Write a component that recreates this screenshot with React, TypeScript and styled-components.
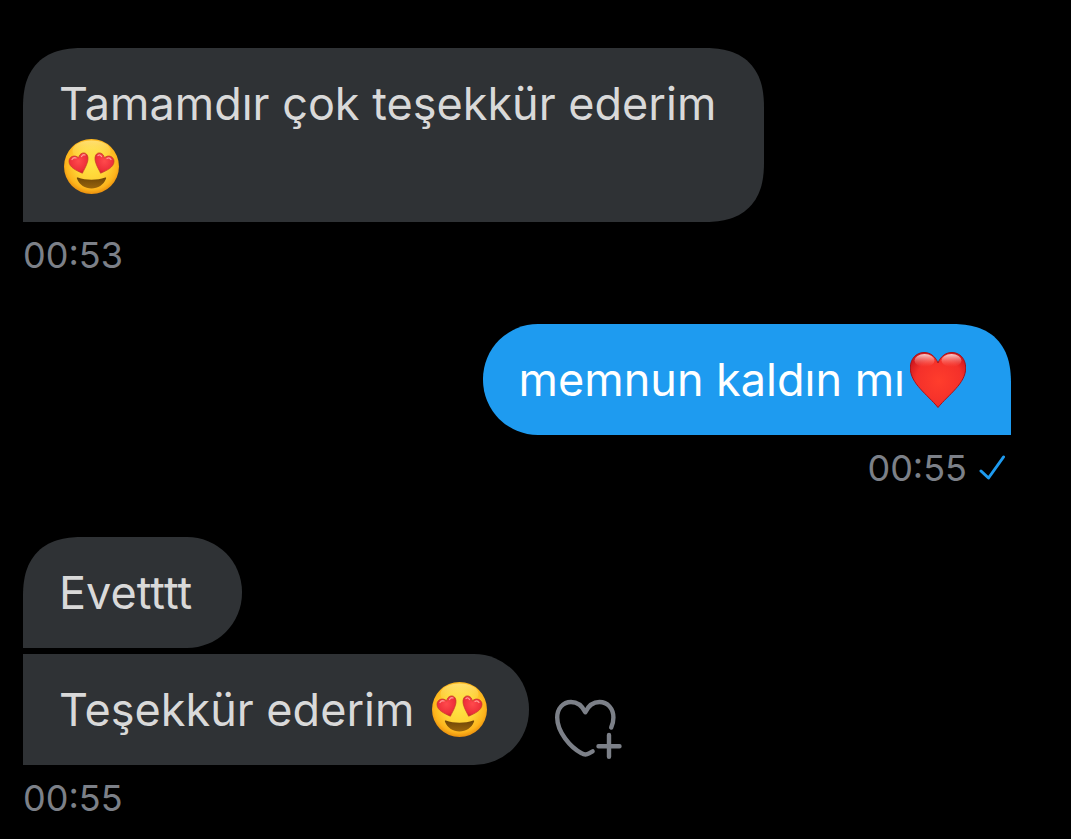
import React, { useId } from "react";
import styled, { createGlobalStyle } from "styled-components";

const GlobalStyle = createGlobalStyle`
  body {
    margin: 0;
    background: #000;
    font-family: Inter, "Liberation Sans", sans-serif;
  }
`;

const Conversation = styled.main`
  display: flex;
  flex-direction: column;
  gap: 48px;
  padding: 48px 60px 20px 23px;
`;

const MessageGroup = styled.section<{ $sent?: boolean }>`
  display: flex;
  flex-direction: column;
  align-items: ${(p) => (p.$sent ? "flex-end" : "flex-start")};
`;

const BubbleRow = styled.div`
  display: flex;
  align-items: center;
  gap: 26px;
  width: 100%;

  & + & {
    margin-top: 6px;
  }
`;

type BubbleShape = "tall" | "first" | "joined" | "sent";

const plainCorners: Record<BubbleShape, string> = {
  tall: "50px 50px 50px 0",
  first: "50px 55px 55px 0",
  joined: "0 55px 55px 0",
  sent: "55px 50px 0 55px",
};

const smoothCorners: Record<BubbleShape, string> = {
  tall: "border-radius: 60px 60px 60px 0; corner-shape: superellipse(1.3);",
  first:
    "border-radius: 60px 55px 55px 0; corner-shape: superellipse(1.3) round round round;",
  joined: "",
  sent: "border-radius: 55px 60px 0 55px; corner-shape: round superellipse(1.3) round round;",
};

const Bubble = styled.p<{ $shape: BubbleShape }>`
  box-sizing: border-box;
  min-width: 219px;
  max-width: 75%;
  margin: 0;
  padding: 24px 36px;
  border-radius: ${(p) => plainCorners[p.$shape]};
  background: ${(p) => (p.$shape === "sent" ? "#1e9bf0" : "#2f3235")};
  color: ${(p) => (p.$shape === "sent" ? "#fff" : "#d9d9d9")};
  font-size: 45px;
  line-height: 63px;

  @supports (corner-shape: superellipse(1.3)) {
    ${(p) => smoothCorners[p.$shape]}
  }
`;

const Meta = styled.div`
  display: flex;
  align-items: center;
  gap: 12px;
  padding-top: 12px;
  color: #7c8088;
  font-size: 36px;
  line-height: 42px;
`;

const EmojiSvg = styled.svg<{ $spaceAfter: number }>`
  display: inline-block;
  width: 56px;
  height: 56px;
  margin: 0 ${(p) => p.$spaceAfter}px 0 5px;
  vertical-align: -12px;
`;

const CheckSvg = styled.svg`
  width: 26px;
  height: 26px;
  margin-right: 6px;
`;

const ReactButton = styled.button`
  display: flex;
  margin-top: 38px;
  padding: 0;
  border: 0;
  background: none;
  color: #7c8088;
  cursor: pointer;
`;

const EYE =
  "M18.4 34.2C12.5 31.6 5 28.4 5 22.3C5 17.2 11.4 15.2 14.6 19C15.2 13.6 21.6 12 23.5 16.6C25.6 22 20.8 29 18.4 34.2Z";

function HeartEyes() {
  const id = useId();
  return (
    <EmojiSvg $spaceAfter={5} viewBox="0 0 56 56" role="img" aria-label="Heart eyes">
      <defs>
        <radialGradient id={id + "f"} cx="0.5" cy="0.45" r="0.57">
          <stop offset="0" stopColor="#ffe545" />
          <stop offset="0.5" stopColor="#ffd436" />
          <stop offset="0.82" stopColor="#fdb41c" />
          <stop offset="1" stopColor="#e5860a" />
        </radialGradient>
        <linearGradient id={id + "s"} x1="0" y1="0" x2="0" y2="1">
          <stop offset="0" stopColor="#fff6a8" stopOpacity="0.6" />
          <stop offset="1" stopColor="#ffe94e" stopOpacity="0" />
        </linearGradient>
        <radialGradient id={id + "h"} cx="0.5" cy="0.4" r="0.65">
          <stop offset="0" stopColor="#ff4a4c" />
          <stop offset="0.7" stopColor="#ee2f3a" />
          <stop offset="1" stopColor="#c91c2a" />
        </radialGradient>
        <linearGradient id={id + "m"} x1="0" y1="0" x2="0" y2="1">
          <stop offset="0" stopColor="#6e4607" />
          <stop offset="1" stopColor="#99650c" />
        </linearGradient>
      </defs>
      <circle cx="27.5" cy="27.5" r="27.5" fill={`url(#${id}f)`} />
      <ellipse cx="27.5" cy="12" rx="19" ry="10.5" fill={`url(#${id}s)`} />
      <path d={EYE} fill={`url(#${id}h)`} stroke="#c23a28" strokeWidth="0.7" />
      <path
        d={EYE}
        fill={`url(#${id}h)`}
        stroke="#c23a28"
        strokeWidth="0.7"
        transform="matrix(-1 0 0 1 55 0)"
      />
      <path
        d="M8 20.5Q9.5 18 12 19M17.5 17.5Q19 15 21 16M34 16.5Q36 15 37.5 17.5M43 19.5Q45.5 18 47 20.5"
        fill="none"
        stroke="#ff9a94"
        strokeWidth="1.3"
        strokeLinecap="round"
      />
      <path
        d="M13.8 38.6C22 41.6 33 41.6 41.2 38.6C42 38.3 42.4 38.7 42 39.7C39.5 46 34 49.4 27.5 49.4C21 49.4 15.5 46 13 39.7C12.6 38.7 13 38.3 13.8 38.6Z"
        fill={`url(#${id}m)`}
      />
    </EmojiSvg>
  );
}

function RedHeart() {
  const id = useId();
  return (
    <EmojiSvg $spaceAfter={9} viewBox="0 0 56 56" role="img" aria-label="Red heart">
      <defs>
        <radialGradient id={id + "h"} cx="0.52" cy="0.52" r="0.6">
          <stop offset="0" stopColor="#ff3d2c" />
          <stop offset="0.7" stopColor="#f4302a" />
          <stop offset="1" stopColor="#cf171d" />
        </radialGradient>
        <linearGradient id={id + "s"} x1="0" y1="0" x2="0" y2="1">
          <stop offset="0" stopColor="#fff" stopOpacity="0.8" />
          <stop offset="1" stopColor="#ff6a5c" stopOpacity="0" />
        </linearGradient>
      </defs>
      <path
        d="M28 11C31 3.5 36.5 0.5 42 0.5C50 0.5 55.7 7 55.7 16C55.7 31.5 38.5 42.5 28 55.5C17.5 42.5 0.3 31.5 0.3 16C0.3 7 6 0.5 14 0.5C19.5 0.5 25 3.5 28 11Z"
        fill={`url(#${id}h)`}
        stroke="#a81218"
        strokeWidth="1"
      />
      <ellipse cx="14.5" cy="8.5" rx="10" ry="6.5" fill={`url(#${id}s)`} />
      <ellipse cx="41.5" cy="8.5" rx="10" ry="6.5" fill={`url(#${id}s)`} />
    </EmojiSvg>
  );
}

function AddReactionIcon() {
  return (
    <svg
      width="68"
      height="60"
      viewBox="0 0 68 60"
      fill="none"
      stroke="currentColor"
      strokeWidth="4.4"
      strokeLinecap="round"
      strokeLinejoin="round"
      aria-hidden="true"
    >
      <path d="M56.2 28.5C57.6 25.5 58.4 22 58.4 18.5C58.4 9.5 52.5 3 44.5 3C38 3 33.5 6.5 30.3 13.2C27 6.5 22.5 3 16 3C8 3 2.2 9.5 2.2 18.5C2.2 33 15.5 48.5 26.5 54.2Q30.3 56.5 34 54.4L37.6 52.4" />
      <path d="M54 36V57.7M43.5 47.2H64.5" />
    </svg>
  );
}

export default function App() {
  return (
    <>
      <GlobalStyle />
      <Conversation>
        <MessageGroup>
          <BubbleRow>
            <Bubble $shape="tall">
              Tamamdır çok teşekkür ederim <HeartEyes />
            </Bubble>
          </BubbleRow>
          <Meta>
            <time>00:53</time>
          </Meta>
        </MessageGroup>

        <MessageGroup $sent>
          <Bubble $shape="sent">
            memnun kaldın mı
            <RedHeart />
          </Bubble>
          <Meta>
            <time>00:55</time>
            <CheckSvg
              viewBox="0 0 26 26"
              fill="none"
              stroke="#1e9bf0"
              strokeWidth="3"
              strokeLinecap="round"
              strokeLinejoin="round"
              role="img"
              aria-label="Seen"
            >
              <path d="M2 16L9.5 23L24.5 2" />
            </CheckSvg>
          </Meta>
        </MessageGroup>

        <MessageGroup>
          <BubbleRow>
            <Bubble $shape="first">Evetttt</Bubble>
          </BubbleRow>
          <BubbleRow>
            <Bubble $shape="joined">
              Teşekkür ederim <HeartEyes />
            </Bubble>
            <ReactButton type="button" aria-label="Add reaction">
              <AddReactionIcon />
            </ReactButton>
          </BubbleRow>
          <Meta>
            <time>00:55</time>
          </Meta>
        </MessageGroup>
      </Conversation>
    </>
  );
}
